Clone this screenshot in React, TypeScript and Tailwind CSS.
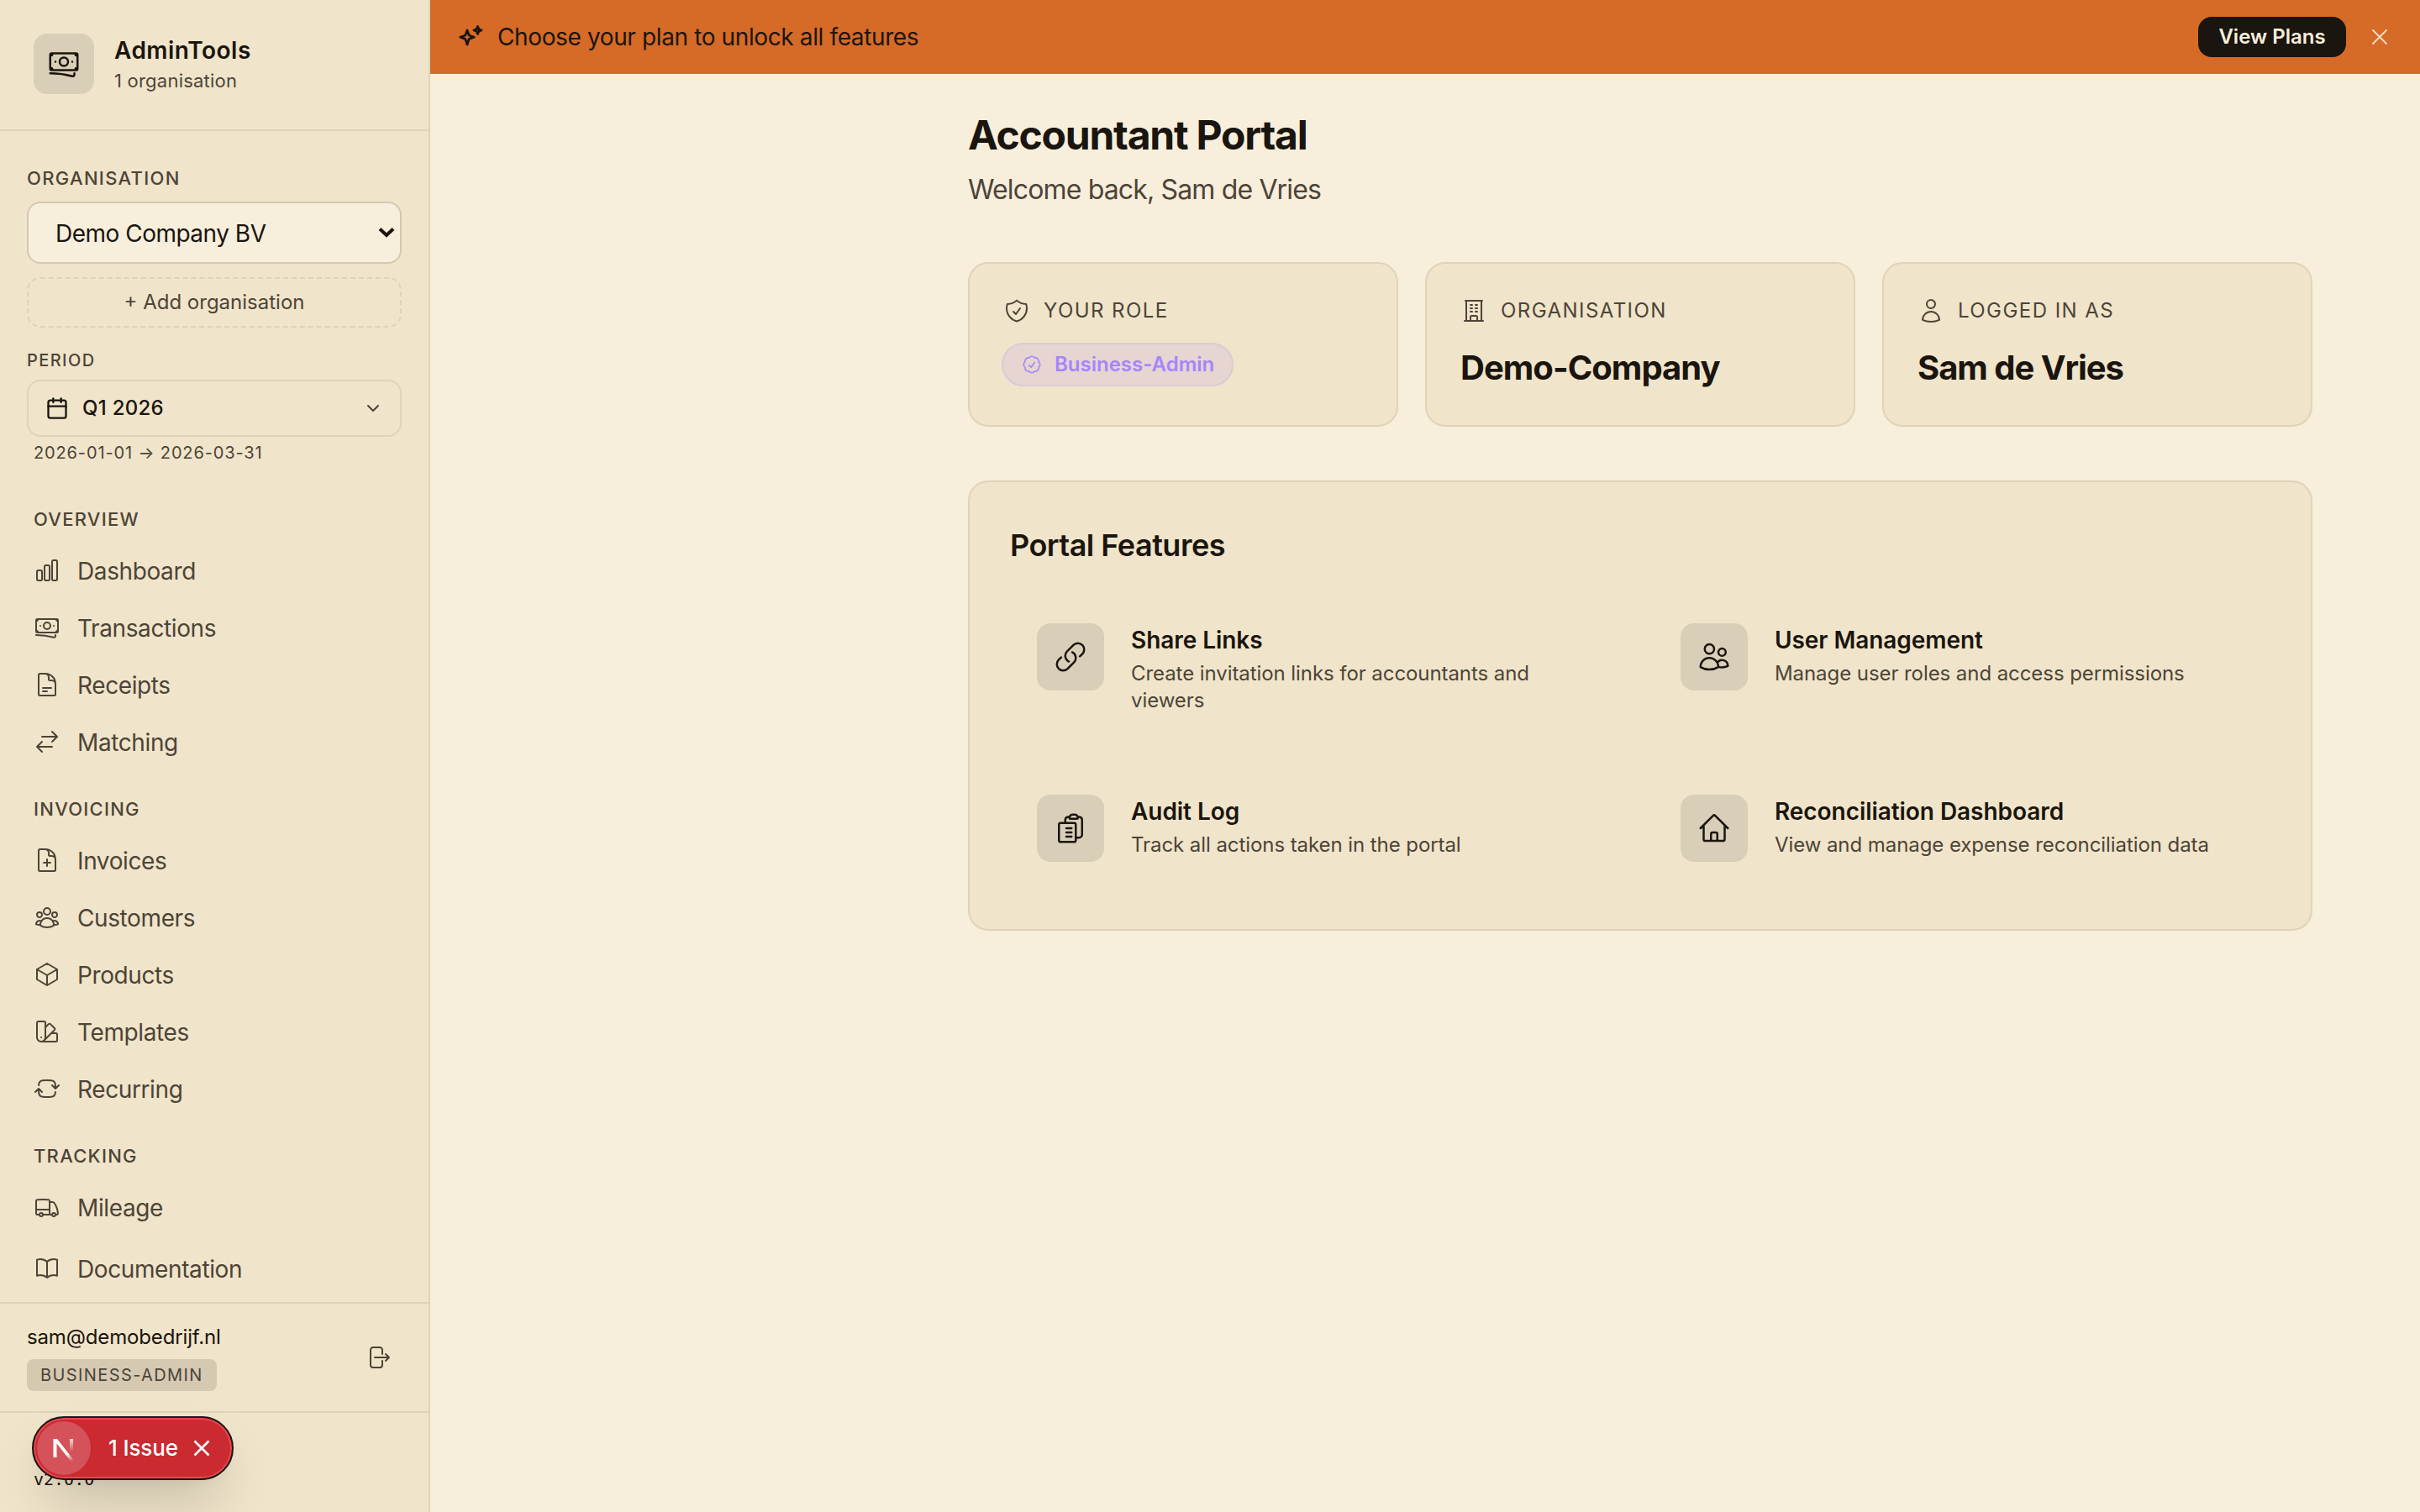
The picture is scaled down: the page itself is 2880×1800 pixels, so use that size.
import type { ComponentType, ReactNode } from "react"
import {
  HiOutlineArrowPathRoundedSquare,
  HiOutlineArrowRightOnRectangle,
  HiOutlineArrowsRightLeft,
  HiOutlineBanknotes,
  HiOutlineBookOpen,
  HiOutlineBuildingOffice,
  HiOutlineChartBar,
  HiOutlineCheckBadge,
  HiOutlineCube,
  HiOutlineDocumentPlus,
  HiOutlineDocumentText,
  HiOutlineHome,
  HiOutlineLink,
  HiOutlineShieldCheck,
  HiOutlineSwatch,
  HiOutlineTruck,
  HiOutlineUser,
  HiOutlineUserGroup,
  HiOutlineUsers,
  HiOutlineXMark,
} from "react-icons/hi2"
import { Calendar, ChevronDown } from "lucide-react"

type Icon = ComponentType<{ className?: string }>

interface NavItem {
  label: string
  icon: Icon
}

const sections: { title: string; items: NavItem[] }[] = [
  {
    title: "Overview",
    items: [
      { label: "Dashboard", icon: HiOutlineChartBar },
      { label: "Transactions", icon: HiOutlineBanknotes },
      { label: "Receipts", icon: HiOutlineDocumentText },
      { label: "Matching", icon: HiOutlineArrowsRightLeft },
    ],
  },
  {
    title: "Invoicing",
    items: [
      { label: "Invoices", icon: HiOutlineDocumentPlus },
      { label: "Customers", icon: HiOutlineUserGroup },
      { label: "Products", icon: HiOutlineCube },
      { label: "Templates", icon: HiOutlineSwatch },
      { label: "Recurring", icon: HiOutlineArrowPathRoundedSquare },
    ],
  },
  {
    title: "Tracking",
    items: [{ label: "Mileage", icon: HiOutlineTruck }],
  },
]

const features: { title: string; description: string; icon: Icon }[] = [
  {
    title: "Share Links",
    description: "Create invitation links for accountants and viewers",
    icon: HiOutlineLink,
  },
  {
    title: "User Management",
    description: "Manage user roles and access permissions",
    icon: HiOutlineUsers,
  },
  {
    title: "Audit Log",
    description: "Track all actions taken in the portal",
    icon: ClipboardIcon,
  },
  {
    title: "Reconciliation Dashboard",
    description: "View and manage expense reconciliation data",
    icon: HiOutlineHome,
  },
]

function ClipboardIcon({ className }: { className?: string }) {
  return (
    <svg className={className} fill="none" stroke="currentColor" strokeWidth={1.5} viewBox="0 0 24 24">
      <path
        strokeLinecap="round"
        strokeLinejoin="round"
        d="M9 12h3.75M9 15h3.75M9 18h3.75m3 .75H18a2.25 2.25 0 0 0 2.25-2.25V6.108c0-1.135-.845-2.098-1.976-2.192a48.424 48.424 0 0 0-1.123-.08m-5.801 0c-.065.21-.1.433-.1.664 0 .414.336.75.75.75h4.5a.75.75 0 0 0 .75-.75 2.25 2.25 0 0 0-.1-.664m-5.8 0A2.251 2.251 0 0 1 13.5 2.25H15c1.012 0 1.867.668 2.15 1.586m-5.8 0c-.376.023-.75.05-1.124.08C9.095 4.01 8.25 4.973 8.25 6.108V8.25m0 0H4.875c-.621 0-1.125.504-1.125 1.125v11.25c0 .621.504 1.125 1.125 1.125h9.75c.621 0 1.125-.504 1.125-1.125V9.375c0-.621-.504-1.125-1.125-1.125H8.25Z"
      />
    </svg>
  )
}

function NavLink({ label, icon: Icon }: NavItem) {
  return (
    <a className="flex h-[68px] items-center gap-5 pl-10 text-[28px] tracking-[-0.014em] text-[#4d4437]">
      <Icon className="size-8 shrink-0" />
      <span className="pt-px">{label}</span>
    </a>
  )
}

function StatCard({ label, icon: Icon, children }: NavItem & { children: ReactNode }) {
  return (
    <div className="h-[196px] rounded-3xl border-2 border-[#dfd3b9] bg-[#f0e4ca] px-10 pt-10">
      <div className="flex h-8 items-center gap-4 text-[#4d4437]">
        <Icon className="size-8" />
        <span className="text-2xl tracking-[0.06em] uppercase">{label}</span>
      </div>
      {children}
    </div>
  )
}

function Sidebar() {
  return (
    <aside className="flex h-[1800px] w-[512px] shrink-0 flex-col border-r-2 border-[#dfd3b9] bg-[#f0e4ca]">
      <div className="flex h-[156px] items-start gap-6 border-b-2 border-[#dfd3b9] px-10 pt-10">
        <div className="flex size-[72px] items-center justify-center rounded-2xl bg-[#d9ceb8]">
          <HiOutlineBanknotes className="size-10" />
        </div>
        <div className="pt-0.5">
          <p className="text-[28px] leading-9 font-semibold tracking-[0.016em]">AdminTools</p>
          <p className="text-[22px] leading-9 tracking-[0.01em] text-[#4d4437]">1 organisation</p>
        </div>
      </div>

      <div className="h-[406px] px-8 pt-10">
        <p className="h-11 text-[22px] leading-8 font-medium tracking-[0.06em] text-[#4d4437] uppercase">
          Organisation
        </p>
        <div className="flex h-[74px] items-center justify-between rounded-2xl border-2 border-[#d3c8b5] bg-[#f7eedc] pr-[5px] pl-8">
          <span className="pt-0.5 text-[28px] tracking-[-0.018em]">Demo Company BV</span>
          <svg className="size-[22px]" viewBox="0 0 22 22" fill="none" stroke="currentColor" strokeWidth={4}>
            <path d="M3 6.500l8 7.500L19 6.500" />
          </svg>
        </div>
        <div className="mt-4 flex h-[60px] items-center justify-center rounded-2xl border-2 border-dashed border-[#dfd3b9] text-2xl text-[#4d4437]">
          + Add organisation
        </div>
        <p className="mt-[25px] text-xl leading-7 font-medium tracking-[0.07em] text-[#4d4437] uppercase">Period</p>
        <div className="mt-[9px] flex h-[68px] items-center rounded-2xl border-2 border-[#dfd3b9] px-5">
          <Calendar className="size-7" />
          <span className="ml-4 flex-1 text-2xl font-medium tracking-[0.012em]">Q1 2026</span>
          <ChevronDown className="size-6 text-[#4d4437]" />
        </div>
        <p className="mt-[3px] pl-2 text-xl leading-8 tracking-[0.043em] text-[#4d4437]">2026-01-01 → 2026-03-31</p>
      </div>

      <nav className="h-[988px] pt-10">
        {sections.map((section) => (
          <div key={section.title} className="mb-[30px]">
            <p className="mb-[11px] pl-10 text-[22px] leading-8 font-medium tracking-[0.057em] text-[#4d4437] uppercase">
              {section.title}
            </p>
            {section.items.map((item) => (
              <NavLink key={item.label} {...item} />
            ))}
          </div>
        ))}
        <div className="-mt-[25px]">
          <NavLink label="Documentation" icon={HiOutlineBookOpen} />
        </div>
      </nav>

      <div className="flex h-[132px] items-center justify-between border-t-2 border-b-2 border-[#dfd3b9] pr-11 pl-8">
        <div>
          <p className="text-2xl tracking-[-0.006em]">sam@demobedrijf.nl</p>
          <p className="mt-2.5 flex h-[38px] w-[226px] items-center rounded-lg bg-[#d5c9b2] pl-4 text-xl tracking-[0.07em] text-[#4d4437]">
            BUSINESS-ADMIN
          </p>
        </div>
        <HiOutlineArrowRightOnRectangle className="size-8 text-[#4d4437]" />
      </div>
      <p className="mt-[63px] pl-10 font-['DejaVu_Sans_Mono',monospace] text-xl leading-8">v2.0.0</p>
    </aside>
  )
}

function IssueBadge() {
  return (
    <div className="absolute top-[1686px] left-[38px] flex h-[76px] w-60 items-center rounded-full border-2 border-[#171717] bg-[#ca2a30] pl-1 text-white shadow-[0_32px_64px_-16px_rgba(0,0,0,0.24),0_8px_16px_-8px_rgba(0,0,0,0.06),inset_0_0_0_2px_#e5484d]">
      <div className="flex size-16 items-center justify-center rounded-full bg-[#d4535a]">
        <svg className="size-10" viewBox="0 0 40 40" fill="none">
          <defs>
            <linearGradient id="diagonal" x1="22" y1="22" x2="31" y2="35" gradientUnits="userSpaceOnUse">
              <stop stopColor="#fff" />
              <stop offset="0.3" stopColor="#fff" />
              <stop offset="1" stopColor="#fff" stopOpacity="0" />
            </linearGradient>
            <linearGradient id="stem" x1="0" y1="9" x2="0" y2="24" gradientUnits="userSpaceOnUse">
              <stop stopColor="#fff" stopOpacity="0.8" />
              <stop offset="1" stopColor="#fff" stopOpacity="0" />
            </linearGradient>
          </defs>
          <path d="M7.500 31V9h4.500L32 34.500l-3 2L11.500 14.500V31z" fill="url(#diagonal)" />
          <path d="M27 9h4v15h-4z" fill="url(#stem)" />
        </svg>
      </div>
      <span className="ml-[21px] pb-px text-[26px] font-medium tracking-[-0.005em]">1 Issue</span>
      <svg className="ml-[18px] size-5" viewBox="0 0 20 20" fill="none" stroke="currentColor" strokeWidth={2.6}>
        <path d="M1.500 1.500l17 17M18.500 1.500l-17 17" />
      </svg>
    </div>
  )
}

export default function App() {
  return (
    <div className="relative flex h-[1800px] w-[2880px] overflow-hidden bg-[#f7eedc] font-['Inter',sans-serif] text-[#1a150e]">
      <Sidebar />

      <div className="flex flex-1 flex-col">
        <div className="flex h-[88px] items-center bg-[#d66a27] px-8">
          <svg
            className="size-8"
            viewBox="0 0 32 32"
            fill="none"
            stroke="currentColor"
            strokeWidth={2.8}
            strokeLinejoin="round"
          >
            <path d="M12 8l2.200 6 6 2.200-6 2.200L12 25l-2.200-6.600-6-2.200 6-2.200z" />
            <path d="M24.500 3.500l1.300 3.200 3.200 1.300-3.200 1.300-1.300 3.200-1.300-3.200L20 8l3.200-1.300z" />
          </svg>
          <span className="ml-4 flex-1 text-[28px] tracking-[-0.0135em]">Choose your plan to unlock all features</span>
          <button className="h-12 w-44 rounded-2xl bg-[#1a150e] text-2xl font-semibold text-[#f7eedc]">View Plans</button>
          <HiOutlineXMark className="ml-6 size-8 text-[#f5d9c2]" />
        </div>

        <main className="ml-[640px] w-[1600px] pt-[43px]">
          <h1 className="text-5xl leading-[60px] font-bold tracking-[-0.0255em]">Accountant Portal</h1>
          <p className="mt-[15px] text-[32px] leading-10 tracking-[-0.0265em] text-[#4d4437]">
            Welcome back, Sam de Vries
          </p>

          <div className="mt-[66px] grid grid-cols-3 gap-8">
            <StatCard label="Your role" icon={HiOutlineShieldCheck}>
              <div className="mt-[22px] -ml-0.5 flex h-[52px] w-[276px] items-center gap-3.5 rounded-full border-2 border-[#dccad6] bg-[#e6d5d0] pl-[21px] text-[#a684ff]">
                <HiOutlineCheckBadge className="size-[26px]" />
                <span className="text-2xl font-semibold">Business-Admin</span>
              </div>
            </StatCard>
            <StatCard label="Organisation" icon={HiOutlineBuildingOffice}>
              <p className="mt-7 text-[40px] leading-[48px] font-bold tracking-[-0.024em]">Demo-Company</p>
            </StatCard>
            <StatCard label="Logged in as" icon={HiOutlineUser}>
              <p className="mt-7 text-[40px] leading-[48px] font-bold tracking-[-0.026em]">Sam de Vries</p>
            </StatCard>
          </div>

          <section className="mt-16 h-[536px] rounded-3xl border-2 border-[#dfd3b9] bg-[#f0e4ca] px-12 pt-[47px]">
            <h2 className="text-4xl leading-[56px] font-semibold tracking-[-0.014em]">Portal Features</h2>
            <div className="mt-[33px] grid grid-cols-2 grid-rows-[172px_144px] gap-8">
              {features.map(({ title, description, icon: Icon }) => (
                <div key={title} className="flex items-start gap-8 p-8">
                  <div className="flex size-20 shrink-0 items-center justify-center rounded-2xl bg-[#d9ceb8]">
                    <Icon className="size-10" />
                  </div>
                  <div>
                    <h3 className="text-[28px] leading-10 font-semibold tracking-[-0.002em]">{title}</h3>
                    <p className="mt-1 text-2xl leading-8 tracking-[-0.003em] text-[#4d4437]">{description}</p>
                  </div>
                </div>
              ))}
            </div>
          </section>
        </main>
      </div>

      <IssueBadge />
    </div>
  )
}
